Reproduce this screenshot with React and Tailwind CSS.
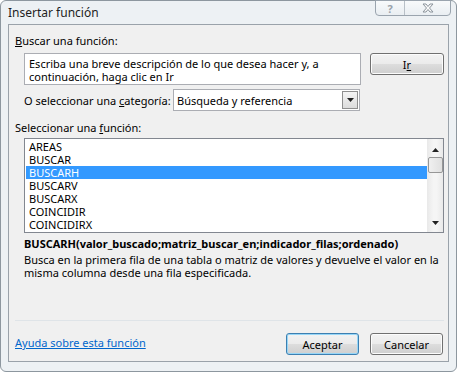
import React from "react";

const font = { fontFamily: "'Noto Sans', 'Open Sans', sans-serif" };

const funcs = ["AREAS", "BUSCAR", "BUSCARH", "BUSCARV", "BUSCARX", "COINCIDIR", "COINCIDIRX"];

const WinButton = ({ children, primary }) => (
  <div
    className={`flex h-[22px] w-[73px] items-center justify-center rounded-[3px] border text-black ${
      primary ? "border-[#3c7fb1] shadow-[inset_0_0_0_1px_#97d6f7]" : "border-[#707070] shadow-[inset_0_0_0_1px_#fcfcfc]"
    } bg-[linear-gradient(#f2f2f2_0%,#ebebeb_50%,#dddddd_50%,#cfcfcf_100%)]`}
  >
    {children}
  </div>
);

const Arrow = ({ up }) => (
  <svg width="7" height="4" viewBox="0 0 7 4">
    <path d={up ? "M0 4 L3.5 0 L7 4 Z" : "M0 0 L3.5 4 L7 0 Z"} fill="#222" />
  </svg>
);

export default function App() {
  return (
    <div
      className="flex h-[372px] w-[457px] flex-col whitespace-nowrap rounded-[6px] border border-[#8d979f] bg-[#edf1f4] text-[11px] leading-[13px] text-black"
      style={font}
    >
      {/* title bar */}
      <div className="flex h-[23px] items-start justify-between">
        <span className="ml-[7px] mt-[4px] text-[12px] leading-[15px] text-[#1e1e1e]">Insertar función</span>
        <div className="-mt-px mr-[5px] flex h-[16px] rounded-b-[4px] border border-[#9aa4ae] bg-[linear-gradient(#f8fafb,#e9eef2)]">
          <div className="flex w-[29px] items-center justify-center border-r border-[#b8c0c7] text-[11px] font-bold leading-none text-[#9aa2aa]">
            ?
          </div>
          <div className="flex w-[45px] items-center justify-center">
            <svg width="12" height="10" viewBox="0 0 12 10">
              <path
                d="M1 1 H4 L6 3.5 L8 1 H11 L7.5 5 L11 9 H8 L6 6.5 L4 9 H1 L4.5 5 Z"
                fill="#fafafa"
                stroke="#8b949c"
                strokeWidth="1"
              />
            </svg>
          </div>
        </div>
      </div>

      {/* client area */}
      <div className="mx-[7px] flex h-[338px] flex-col border border-[#9aa2aa] bg-[#f0f0f0] pl-[6px] pr-[4px]">
        <div className="mt-[8px] leading-[15px]">
          <u>B</u>uscar una función:
        </div>

        <div className="mt-[5px] flex items-start">
          <div className="ml-[9px] h-[32px] w-[337px] border border-[#abadb3] bg-white px-[4px] pt-[3px]">
            Escriba una breve descripción de lo que desea hacer y, a<br />
            continuación, haga clic en Ir
          </div>
          <div className="ml-[9px] flex h-[22px] w-[74px] items-center justify-center rounded-[3px] border border-[#707070] bg-[linear-gradient(#f2f2f2_0%,#ebebeb_50%,#dddddd_50%,#cfcfcf_100%)] shadow-[inset_0_0_0_1px_#fcfcfc]">
            I<u>r</u>
          </div>
        </div>

        <div className="mt-[4px] flex items-center">
          <span className="ml-[9px]">
            O seleccionar una <u>c</u>ategoría:
          </span>
          <div className="ml-auto mr-[84px] flex h-[22px] w-[187px] items-center border border-[#abadb3] bg-white pl-[3px]">
            <span className="flex-1">Búsqueda y referencia</span>
            <div className="mr-px flex h-[18px] w-[16px] items-center justify-center border border-[#8f8f8f] bg-[linear-gradient(#f4f4f4,#dcdcdc)]">
              <Arrow />
            </div>
          </div>
        </div>

        <div className="mt-[9px] leading-[15px]">
          Seleccionar una <u>f</u>unción:
        </div>

        <div className="ml-[9px] mt-[3px] flex h-[95px] w-[420px] border border-[#828790] bg-white">
          <div className="flex flex-1 flex-col pl-px pt-px">
            {funcs.map((f) => (
              <div
                key={f}
                className={`h-[13px] pl-[3px] ${f === "BUSCARH" ? "bg-[#3399ff] text-white" : ""}`}
              >
                {f}
              </div>
            ))}
          </div>
          <div className="flex w-[16px] flex-col items-center bg-[linear-gradient(90deg,#e9e9e9,#f5f5f5_40%,#f5f5f5_60%,#e9e9e9)]">
            <div className="mt-[9px] flex">
              <Arrow up />
            </div>
            <div className="mt-[5px] h-[16px] w-[15px] rounded-[2px] border border-[#979797] bg-[linear-gradient(90deg,#f0f0f0,#e0e0e0)]" />
            <div className="mb-[7px] mt-auto flex">
              <Arrow />
            </div>
          </div>
        </div>

        <div className="ml-[9px] mt-[4px] font-bold">
          BUSCARH(valor_buscado;matriz_buscar_en;indicador_filas;ordenado)
        </div>
        <div className="ml-[9px] mt-[3px]">
          Busca en la primera fila de una tabla o matriz de valores y devuelve el valor en la
          <br />
          misma columna desde una fila especificada.
        </div>

        <div className="mt-auto border-t border-[#dfe4e8]" />
        <div className="mb-[6px] mt-[12px] flex items-start">
          <span className="mt-[3px] text-[#0066cc] underline">Ayuda sobre esta función</span>
          <div className="ml-auto mr-px flex gap-[11px]">
            <WinButton primary>Aceptar</WinButton>
            <WinButton>Cancelar</WinButton>
          </div>
        </div>
      </div>
    </div>
  );
}
